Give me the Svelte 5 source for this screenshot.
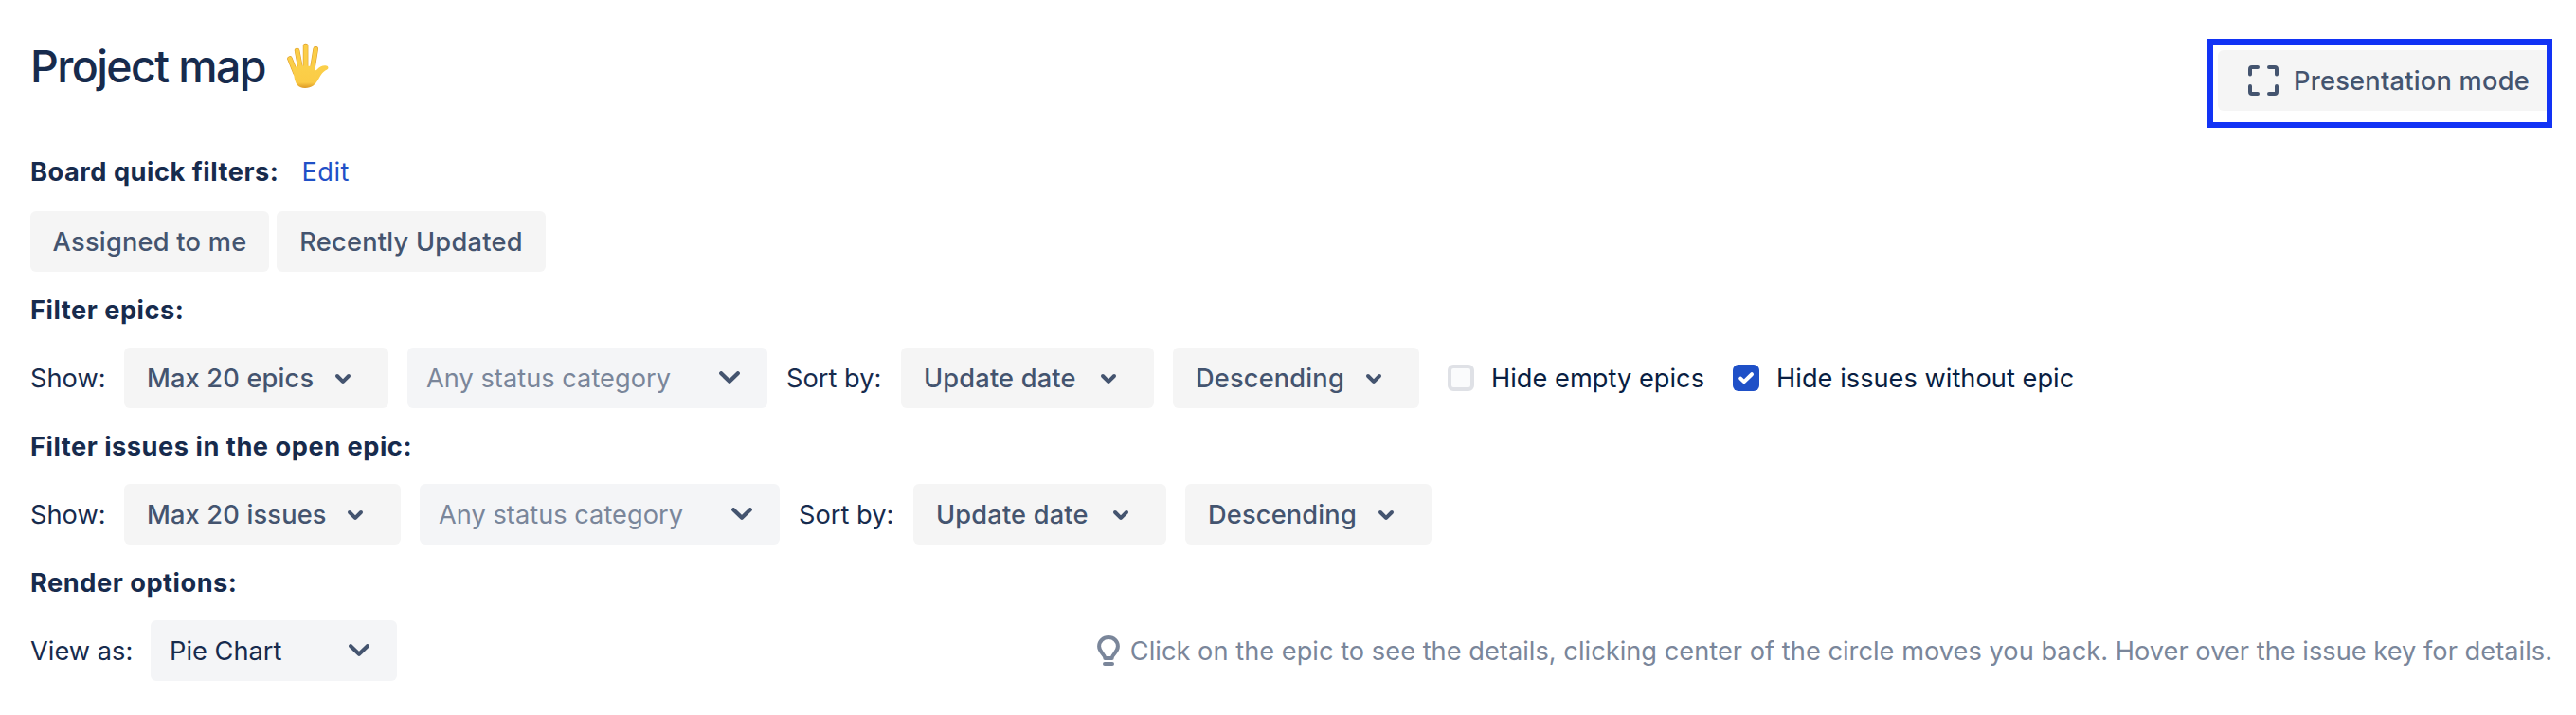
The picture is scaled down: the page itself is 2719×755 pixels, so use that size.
<script>
  let hideEmpty = $state(false);
  let hideWithoutEpic = $state(true);

  const quickFilters = [
    { label: 'Assigned to me', width: 252 },
    { label: 'Recently Updated', width: 284 }
  ];
</script>

{#snippet smallChevron()}
  <svg class="small-chevron" viewBox="0 0 24 24">
    <path d="M8.292 10.293a1.009 1.009 0 000 1.419l2.939 2.965c.218.215.5.322.779.322s.556-.107.769-.322l2.93-2.955a1.01 1.01 0 000-1.419.987.987 0 00-1.406 0l-2.298 2.317-2.307-2.327a.99.99 0 00-1.406 0z" fill="currentColor" />
  </svg>
{/snippet}

{#snippet dropdown(label, width)}
  <button class="btn dropdown" style:width="{width}px">
    <span class="text">{label}</span>
    {@render smallChevron()}
  </button>
{/snippet}

{#snippet select(label, width, placeholder)}
  <div class="select" class:placeholder style:width="{width}px">
    <span class="text">{label}</span>
    <svg class="chevron" viewBox="0 0 22 14">
      <path d="M2.2 2.2 11 10.8l8.8-8.6" fill="none" stroke="currentColor" stroke-width="4.2" stroke-linecap="round" stroke-linejoin="round" />
    </svg>
  </div>
{/snippet}

{#snippet checkbox(label, checked, toggle)}
  <button class="check" role="checkbox" aria-checked={checked} onclick={toggle}>
    <span class="box" class:checked>
      {#if checked}
        <svg viewBox="0 0 28 28">
          <path d="M8.2 14.6l3.7 3.5L20 10.2" fill="none" stroke="#fff" stroke-width="4" stroke-linecap="round" stroke-linejoin="round" />
        </svg>
      {/if}
    </span>
    <span class="text">{label}</span>
  </button>
{/snippet}

<main>
  <header>
    <h1>
      <span>Project map</span>
      <svg class="hand" viewBox="0 0 44 49">
        <defs>
          <linearGradient id="skin" x1="0" y1="0" x2="0" y2="1">
            <stop offset="0" stop-color="#fbd04a" />
            <stop offset="0.75" stop-color="#fbcb45" />
            <stop offset="1" stop-color="#dc9824" />
          </linearGradient>
        </defs>
        <g fill="none" stroke-linecap="round">
          <g stroke="#dfa02b" stroke-width="5.6">
            <path d="M3 17l6 15" />
            <path d="M10.6 8.5l3.8 20" />
            <path d="M19.6 3.6v24" />
            <path d="M30.2 6.8l-3.6 22" />
          </g>
          <g stroke="#fbce48" stroke-width="4.4">
            <path d="M3 17l6 15" />
            <path d="M10.6 8.5l3.8 20" />
            <path d="M19.6 3.6v24" />
            <path d="M30.2 6.8l-3.6 22" />
          </g>
        </g>
        <path d="M6.5 29C8 25 12 24.6 19 24.5c5 0 8.5.5 10 3.5.6 1.5 1.5 1.5 2.8.2 3-3.2 6.8-4.7 9.8-3.7 2.6.8 2.3 3.3.2 4.3-4.3 2-5.8 5.2-8.3 9.2-3.5 6.5-7.5 10-14.500 10C11 48 8.500 42.500 7.500 36z" fill="url(#skin)" />
      </svg>
    </h1>
    <div class="highlight">
      <button class="btn presentation">
        <svg class="fullscreen" viewBox="0 0 32 32">
          <path d="M2 9.5V4a2 2 0 012-2h6M22 2h6a2 2 0 012 2v5.5M30 22v6a2 2 0 01-2 2h-6M10 30H4a2 2 0 01-2-2v-6" fill="none" stroke="currentColor" stroke-width="4" stroke-linecap="round" />
        </svg>
        <span class="text">Presentation mode</span>
      </button>
    </div>
  </header>

  <div class="heading quick">
    <h2 class="text">Board quick filters:</h2>
    <a class="text" href="#edit">Edit</a>
  </div>
  <div class="row quick-filters">
    {#each quickFilters as filter}
      <button class="btn text" style:width="{filter.width}px">{filter.label}</button>
    {/each}
  </div>

  <div class="heading"><h2 class="text">Filter epics:</h2></div>
  <div class="row">
    <span class="text show">Show:</span>
    {@render dropdown('Max 20 epics', 279)}
    {@render select('Any status category', 380, true)}
    <span class="text sort">Sort by:</span>
    {@render dropdown('Update date', 267)}
    {@render dropdown('Descending', 260)}
    <div class="checks">
      {@render checkbox('Hide empty epics', hideEmpty, () => (hideEmpty = !hideEmpty))}
      {@render checkbox('Hide issues without epic', hideWithoutEpic, () => (hideWithoutEpic = !hideWithoutEpic))}
    </div>
  </div>

  <div class="heading"><h2 class="text">Filter issues in the open epic:</h2></div>
  <div class="row">
    <span class="text show">Show:</span>
    {@render dropdown('Max 20 issues', 292)}
    {@render select('Any status category', 380, true)}
    <span class="text sort">Sort by:</span>
    {@render dropdown('Update date', 267)}
    {@render dropdown('Descending', 260)}
  </div>

  <div class="heading"><h2 class="text">Render options:</h2></div>
  <div class="row">
    <span class="text view">View as:</span>
    {@render select('Pie Chart', 260, false)}
    <p class="hint">
      <svg class="bulb" viewBox="0 0 24 32">
        <path d="M8.3 24c0-4-6.2-6.2-6.2-12.4C2.1 6 6.5 2.1 12 2.1s9.9 3.9 9.9 9.5c0 6.2-6.2 8.4-6.2 12.4z" fill="none" stroke="currentColor" stroke-width="4" stroke-linejoin="round" />
        <rect x="6" y="28" width="12" height="4" rx="2" fill="currentColor" />
      </svg>
      <span class="text">Click on the epic to see the details, clicking center of the circle moves you back. Hover over the issue key for details.</span>
    </p>
  </div>
</main>

<style>
  :global(body) {
    background: #fff;
  }

  main {
    box-sizing: border-box;
    height: 755px;
    padding: 0 25px 0 32px;
    font-family: Inter, 'Liberation Sans', sans-serif;
    font-size: 27.2px;
    line-height: 40px;
    letter-spacing: 0.03px;
    color: #172b4d;
    white-space: nowrap;
  }

  button {
    padding: 0;
    border: 0;
    font: inherit;
    letter-spacing: inherit;
    color: inherit;
    background: none;
    white-space: nowrap;
  }

  svg {
    display: block;
    flex: none;
  }

  h1,
  h2,
  p {
    margin: 0;
  }

  header {
    display: flex;
    justify-content: space-between;
    height: 143px;
  }

  h1 {
    display: flex;
    align-items: flex-start;
    padding-top: 40px;
    font-size: 46.5px;
    line-height: 60px;
    font-weight: 500;
    letter-spacing: -1.6px;
  }

  h1 span {
    width: 271px;
  }

  .hand {
    width: 44px;
    height: 49px;
    margin-top: 5px;
  }

  .highlight {
    box-sizing: border-box;
    width: 364px;
    height: 94px;
    margin-top: 41px;
    padding: 6px 0 0 5px;
    border: 6px solid #1233f5;
  }

  /* optical centring, the caps sit a little high otherwise */
  .text {
    padding-top: 2px;
  }

  .btn {
    height: 64px;
    border-radius: 6px;
    background: #f5f5f5;
    color: #44546f;
    font-weight: 500;
    letter-spacing: 0.25px;
  }

  .presentation {
    display: flex;
    align-items: center;
    gap: 16px;
    width: 347px;
    padding-left: 32px;
    border-radius: 6px 0 0 6px;
  }

  .fullscreen {
    width: 32px;
    height: 32px;
  }

  .heading {
    display: flex;
    align-items: center;
    height: 80px;
  }

  .heading.quick {
    box-sizing: border-box;
    gap: 24px;
    padding-bottom: 4px;
  }

  h2 {
    font-size: inherit;
    font-weight: 700;
    letter-spacing: 0.53px;
  }

  a {
    color: #1f50c7;
    letter-spacing: 0.5px;
    text-decoration: none;
  }

  .row {
    display: flex;
    align-items: center;
    gap: 20px;
    height: 64px;
  }

  .quick-filters {
    gap: 8px;
  }

  .show {
    width: 79px;
  }

  .sort {
    width: 101px;
  }

  .view {
    width: 107px;
  }

  .dropdown {
    display: flex;
    align-items: center;
    justify-content: space-between;
    padding: 0 24px;
    letter-spacing: 0.18px;
  }

  .small-chevron {
    width: 48px;
    height: 48px;
  }

  .select {
    box-sizing: border-box;
    display: flex;
    align-items: center;
    justify-content: space-between;
    height: 64px;
    padding: 0 29px 0 20px;
    border-radius: 6px;
    background: #f4f5f7;
  }

  .placeholder {
    color: #7a869a;
  }

  .chevron {
    width: 22px;
    height: 14px;
    color: #44546f;
  }

  .checks {
    display: flex;
    gap: 30px;
    margin-left: 10px;
  }

  .check {
    display: flex;
    align-items: center;
    gap: 18px;
    color: #091e42;
  }

  .box {
    box-sizing: border-box;
    width: 28px;
    height: 28px;
    border: 4px solid #dfe1e6;
    border-radius: 6px;
    background: #fafbfc;
  }

  .box.checked {
    border: 0;
    background: #1f50c7;
  }

  .hint {
    display: flex;
    align-items: center;
    gap: 11px;
    margin-left: auto;
    color: #7a869a;
  }

  .bulb {
    width: 24px;
    height: 32px;
  }
</style>
